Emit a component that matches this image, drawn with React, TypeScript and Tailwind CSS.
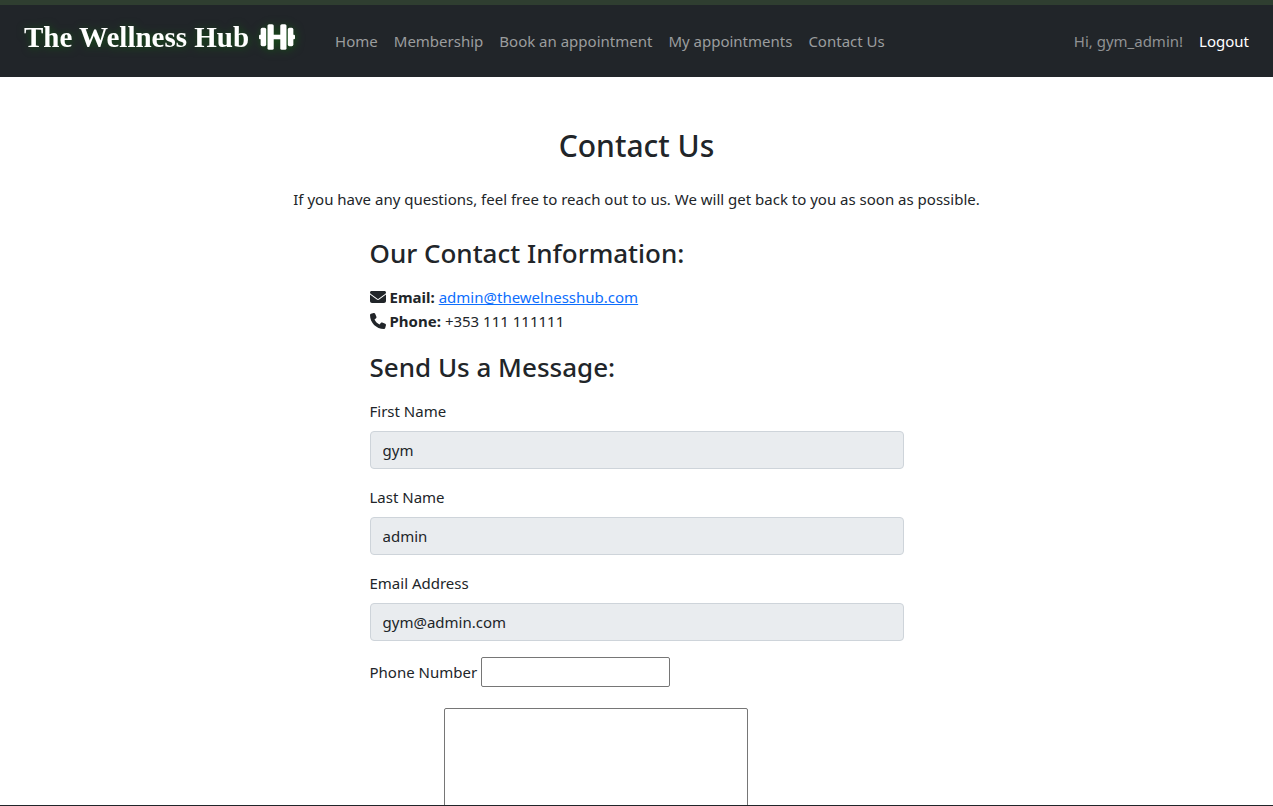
import { FaEnvelope, FaPhone } from "react-icons/fa6";

const links = ["Home", "Membership", "Book an appointment", "My appointments", "Contact Us"];

const fields = [
  { id: "first_name", label: "First Name", value: "gym" },
  { id: "last_name", label: "Last Name", value: "admin" },
  { id: "email", label: "Email Address", value: "gym@admin.com" },
];

function Dumbbell() {
  return (
    <svg viewBox="0 0 110 78" className="h-[26px] w-9" fill="currentColor" aria-hidden="true">
      <rect x="0" y="32" width="12" height="14" rx="3" />
      <rect x="5" y="11" width="17" height="56" rx="5" />
      <rect x="26" y="0" width="19" height="78" rx="5" />
      <rect x="40" y="32" width="30" height="14" />
      <rect x="65" y="0" width="19" height="78" rx="5" />
      <rect x="88" y="11" width="17" height="56" rx="5" />
      <rect x="98" y="32" width="12" height="14" rx="3" />
    </svg>
  );
}

export default function App() {
  return (
    <div className="flex h-screen flex-col border-b border-[#212529] bg-white font-['Noto_Sans','Open_Sans',sans-serif] text-[15px] leading-6 text-[#212529]">
      <header className="flex h-[77px] shrink-0 items-center border-t-5 border-[#2f3e30] bg-[#212529] px-6">
        <a
          href="#home"
          className="mr-10 flex items-center gap-2.5 pb-2 font-['Liberation_Serif',serif] text-[29px] leading-9 font-bold whitespace-nowrap text-white [filter:drop-shadow(1px_1px_4px_#145214)]"
        >
          The Wellness Hub
          <Dumbbell />
        </a>
        <nav className="flex flex-1 items-center gap-4 whitespace-nowrap">
          {links.map((link) => (
            <a key={link} href={`#${link.toLowerCase().replaceAll(" ", "-")}`} className="text-[#9b9d9e]">
              {link}
            </a>
          ))}
          <span className="ml-auto text-[#909294]">Hi, gym_admin!</span>
          <a href="#logout" className="text-white">
            Logout
          </a>
        </nav>
      </header>

      <main className="min-h-0 flex-1 overflow-y-auto px-6 pt-[49px] [scrollbar-width:none]">
        <h1 className="text-center text-[30px] leading-10 font-medium">Contact Us</h1>
        <p className="mt-[21px] text-center">
          If you have any questions, feel free to reach out to us. We will get back to you as soon as possible.
        </p>

        <div className="mx-auto mt-6 w-full max-w-[534px]">
          <h2 className="text-[26px] leading-9 font-medium">Our Contact Information:</h2>
          <div className="mt-3.5">
            <p className="flex items-center gap-1">
              <FaEnvelope className="size-4" aria-hidden="true" />
              <strong>Email:</strong>
              <a href="mailto:admin@thewelnesshub.com" className="text-[#0d6efd] underline">
                admin@thewelnesshub.com
              </a>
            </p>
            <p className="flex items-center gap-1">
              <FaPhone className="size-4" aria-hidden="true" />
              <strong>Phone:</strong>
              <span>+353 111 111111</span>
            </p>
          </div>

          <h2 className="mt-4 text-[26px] leading-9 font-medium">Send Us a Message:</h2>
          <form className="mt-3.5">
            {fields.map((field) => (
              <div key={field.id} className="mb-4">
                <label htmlFor={field.id} className="mb-2 block">
                  {field.label}
                </label>
                <input
                  id={field.id}
                  readOnly
                  defaultValue={field.value}
                  className="block h-[38px] w-full rounded border border-[#ced4da] bg-[#e9ecef] px-3"
                />
              </div>
            ))}
            <div className="flex items-center gap-1">
              <label htmlFor="phone">Phone Number</label>
              <input id="phone" type="tel" className="h-[30px] w-[189px] rounded-xs border border-[#767676] px-1" />
            </div>
            <textarea
              aria-label="Message"
              rows={10}
              className="mt-[21px] ml-[74px] block w-[304px] resize-none rounded-xs border border-[#767676] p-1"
            />
          </form>
        </div>
      </main>
    </div>
  );
}
